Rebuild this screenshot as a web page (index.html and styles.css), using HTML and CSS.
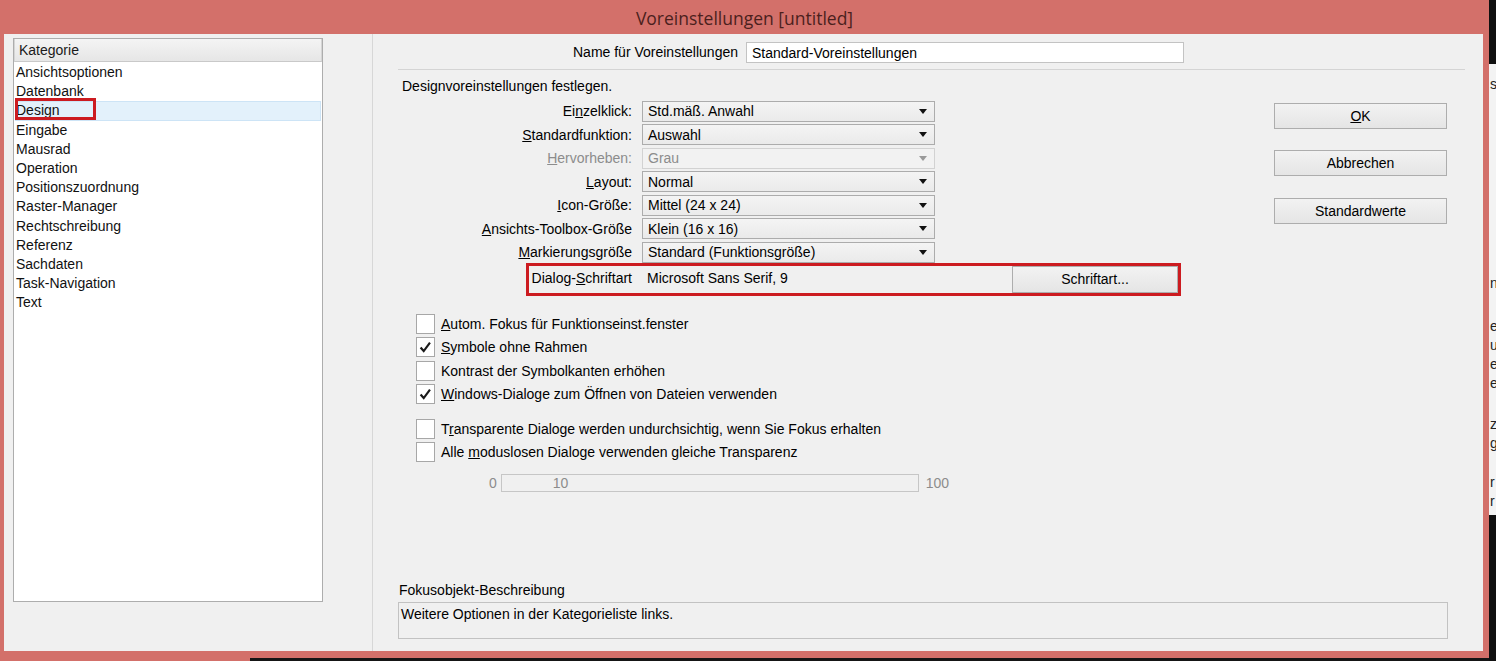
FILE: index.html
```
<!DOCTYPE html>
<html lang="de">
<head>
  <meta charset="UTF-8" />
  <title>Voreinstellungen [untitled]</title>
  <link rel="stylesheet" href="styles.css">
</head>
<body>
  <div class="screen">
    <div class="window">
      <div class="titlebar">Voreinstellungen [untitled]</div>
      <div class="frame">
        <div class="content">

          <div class="sidebar">
            <div class="listbox">
              <div class="list-head">Kategorie</div>
              <ul class="list">
                <li>Ansichtsoptionen</li>
                <li>Datenbank</li>
                <li class="selected">Design<span class="mark"></span></li>
                <li>Eingabe</li>
                <li>Mausrad</li>
                <li>Operation</li>
                <li>Positionszuordnung</li>
                <li>Raster-Manager</li>
                <li>Rechtschreibung</li>
                <li>Referenz</li>
                <li>Sachdaten</li>
                <li>Task-Navigation</li>
                <li>Text</li>
              </ul>
            </div>
          </div>

          <div class="main">
            <div class="name-row">
              <span class="label">Name für Voreinstellungen</span>
              <div class="textbox">Standard-Voreinstellungen</div>
            </div>
            <div class="rule"></div>
            <p class="intro">Designvoreinstellungen festlegen.</p>

            <div class="body">
              <div class="form">
                <div class="fields">
                  <span class="label">Ei<u>n</u>zelklick:</span>
                  <div class="select"><span>Std.mäß. Anwahl</span><svg class="arrow" viewBox="0 0 8 5"><polygon points="0,0 8,0 4,5"/></svg></div>

                  <span class="label"><u>S</u>tandardfunktion:</span>
                  <div class="select"><span>Auswahl</span><svg class="arrow" viewBox="0 0 8 5"><polygon points="0,0 8,0 4,5"/></svg></div>

                  <span class="label disabled"><u>H</u>ervorheben:</span>
                  <div class="select disabled"><span>Grau</span><svg class="arrow" viewBox="0 0 8 5"><polygon points="0,0 8,0 4,5"/></svg></div>

                  <span class="label"><u>L</u>ayout:</span>
                  <div class="select"><span>Normal</span><svg class="arrow" viewBox="0 0 8 5"><polygon points="0,0 8,0 4,5"/></svg></div>

                  <span class="label"><u>I</u>con-Größe:</span>
                  <div class="select"><span>Mittel (24 x 24)</span><svg class="arrow" viewBox="0 0 8 5"><polygon points="0,0 8,0 4,5"/></svg></div>

                  <span class="label"><u>A</u>nsichts-Toolbox-Größe</span>
                  <div class="select"><span>Klein (16 x 16)</span><svg class="arrow" viewBox="0 0 8 5"><polygon points="0,0 8,0 4,5"/></svg></div>

                  <span class="label"><u>M</u>arkierungsgröße</span>
                  <div class="select"><span>Standard (Funktionsgröße)</span><svg class="arrow" viewBox="0 0 8 5"><polygon points="0,0 8,0 4,5"/></svg></div>
                </div>

                <div class="font-row">
                  <span class="font-label">Dialog-<u>S</u>chriftart</span>
                  <span class="font-value">Microsoft Sans Serif, 9</span>
                  <button class="btn btn-font">Schriftart...</button>
                </div>

                <div class="checks">
                  <div class="check"><span class="box"></span><span><u>A</u>utom. Fokus für Funktionseinst.fenster</span></div>
                  <div class="check"><span class="box"><svg viewBox="0 0 19 20"><polyline points="4,10.5 7.5,14.5 14.5,5"/></svg></span><span><u>S</u>ymbole ohne Rahmen</span></div>
                  <div class="check"><span class="box"></span><span>Kontrast der Symbolkanten erhöhen</span></div>
                  <div class="check"><span class="box"><svg viewBox="0 0 19 20"><polyline points="4,10.5 7.5,14.5 14.5,5"/></svg></span><span><u>W</u>indows-Dialoge zum Öffnen von Dateien verwenden</span></div>
                </div>

                <div class="checks checks-gap">
                  <div class="check"><span class="box"></span><span>T<u>r</u>ansparente Dialoge werden undurchsichtig, wenn Sie Fokus erhalten</span></div>
                  <div class="check"><span class="box"></span><span>Alle <u>m</u>oduslosen Dialoge verwenden gleiche Transparenz</span></div>
                </div>

                <div class="slider">
                  <span>0</span>
                  <div class="track">10</div>
                  <span class="max">100</span>
                </div>
              </div>

              <div class="buttons">
                <button class="btn"><u>O</u>K</button>
                <button class="btn">Abbrechen</button>
                <button class="btn">Standardwerte</button>
              </div>
            </div>

            <div class="focus">
              <div class="focus-label">Fokusobjekt-Beschreibung</div>
              <div class="focus-box">Weitere Optionen in der Kategorieliste links.</div>
            </div>
          </div>

        </div>
      </div>
      <div class="bottom-edge"><div class="taskbar"></div></div>
    </div>

    <div class="behind">
      <div class="behind-page">
        <div class="frag f1">s</div>
        <div class="frag f2">n</div>
        <div class="frag f3">e</div>
        <div class="frag">u</div>
        <div class="frag">e</div>
        <div class="frag">e</div>
        <div class="frag f4">z</div>
        <div class="frag">g</div>
        <div class="frag f5">r</div>
        <div class="frag">r</div>
      </div>
    </div>
  </div>
</body>
</html>
```

FILE: styles.css
```
body {
  margin: 0;
  background: #d3706a;
  font-family: "Liberation Sans", Arial, sans-serif;
  font-size: 14px;
  color: #000;
}

.screen {
  display: flex;
  width: 1496px;
  height: 661px;
  overflow: hidden;
}

.window {
  width: 1489px;
  display: flex;
  flex-direction: column;
  background: #d3706a;
}

.titlebar {
  height: 34px;
  display: flex;
  justify-content: center;
  align-items: center;
  padding-top: 1px;
  box-sizing: border-box;
  font-family: "Open Sans", "Noto Sans", sans-serif;
  font-size: 17.5px;
  color: #4b1f1d;
}

.frame {
  padding: 0 6px 0 4px;
}

.content {
  height: 617px;
  background: #f0f0f0;
  display: flex;
}

/* left category list */
.sidebar {
  width: 369px;
  border-right: 1px solid #d7d7d7;
  padding: 4px 0 0 9px;
  box-sizing: border-box;
}

.listbox {
  width: 310px;
  height: 564px;
  box-sizing: border-box;
  border: 1px solid #adadad;
  background: #fff;
}

.list-head {
  height: 22px;
  line-height: 23px;
  padding-left: 4px;
  border: 1px solid #d5d5d5;
  border-top: none;
  border-bottom-color: #c9c9c9;
  background: linear-gradient(#f4f4f4, #e6e6e6);
  color: #1a1a1a;
}

.list {
  list-style: none;
  margin: 0;
  padding: 1px 0 0;
}

.list li {
  height: 19.2px;
  line-height: 19.2px;
  padding-left: 1px;
  margin: 0 1px;
  color: #111;
}

.list li.selected {
  position: relative;
  background: #e3f1fb;
  box-shadow: inset 0 0 0 1px #cde4f6;
}

.mark {
  position: absolute;
  left: 0;
  top: -3px;
  width: 81px;
  height: 22px;
  box-sizing: border-box;
  border: 3px solid #cc1b20;
}

/* right side */
.main {
  flex: 1;
  display: flex;
  flex-direction: column;
}

.label {
  text-align: right;
  white-space: nowrap;
}

.label.disabled {
  color: #8c8c8c;
}

.name-row {
  display: grid;
  grid-template-columns: 365px 438px;
  column-gap: 8px;
  align-items: center;
  margin-top: 7px;
  line-height: 22px;
}

.textbox {
  height: 21px;
  line-height: 20px;
  box-sizing: border-box;
  border: 1px solid #c3c3c3;
  background: #fff;
  padding-left: 5px;
}

.rule {
  margin: 6px 18px 0 25px;
  border-top: 1px solid #d4d4d4;
}

.intro {
  margin: 8px 0 0 29px;
  line-height: 17px;
}

.body {
  display: flex;
}

.form {
  width: 887px;
}

.fields {
  display: grid;
  grid-template-columns: 259px 293px;
  grid-auto-rows: 21px;
  column-gap: 10px;
  row-gap: 2.5px;
  margin-top: 5.5px;
  align-items: center;
}

.select {
  height: 21px;
  box-sizing: border-box;
  border: 1px solid #acacac;
  background: linear-gradient(#f4f4f4, #eaeaea);
  display: flex;
  align-items: center;
  justify-content: space-between;
  padding: 0 7px 0 5px;
}

.arrow {
  width: 8px;
  height: 5px;
  fill: #111;
}

.select.disabled {
  color: #8c8c8c;
  border-color: #d2d2d2;
  background: #f2f2f2;
}

.select.disabled .arrow {
  fill: #9a9a9a;
}

.font-row {
  margin-left: 153px;
  width: 655px;
  height: 33px;
  box-sizing: border-box;
  border: 3px solid #cc1b20;
  display: flex;
  align-items: center;
}

.font-label {
  width: 103px;
  text-align: right;
  white-space: nowrap;
  margin-bottom: 3px;
}

.font-value {
  flex: 1;
  margin-left: 15px;
  margin-bottom: 3px;
}

.btn {
  width: 173px;
  height: 26px;
  box-sizing: border-box;
  border: 1px solid #adadad;
  background: linear-gradient(#f2f2f2, #e5e5e5);
  font-family: inherit;
  font-size: 14px;
  color: #000;
  padding: 0;
}

.btn-font {
  width: 166px;
  height: 27px;
}

.checks {
  margin: 16.5px 0 0 43px;
}

.checks-gap {
  margin-top: 11px;
}

.check {
  height: 23.5px;
  display: flex;
  align-items: center;
}

.box {
  width: 19px;
  height: 20px;
  box-sizing: border-box;
  border: 1px solid #a7a7a7;
  background: #fff;
  margin-right: 6px;
  display: flex;
}

.box svg {
  width: 17px;
  height: 18px;
  fill: none;
  stroke: #1a1a1a;
  stroke-width: 2.4;
}

.slider {
  margin-top: 9.5px;
  padding-left: 116px;
  height: 18px;
  display: flex;
  align-items: center;
  color: #8c8c8c;
}

.track {
  width: 418px;
  height: 18px;
  box-sizing: border-box;
  margin-left: 4px;
  border: 1px solid #c6c6c6;
  padding-left: 51px;
  line-height: 16px;
}

.max {
  margin-left: 7px;
}

.buttons {
  margin-left: 14px;
  padding-top: 7.5px;
  display: flex;
  flex-direction: column;
  gap: 21.5px;
}

.focus {
  margin-top: auto;
  padding: 0 35px 12px 25px;
}

.focus-label {
  line-height: 16px;
  padding-left: 1px;
  margin-bottom: 4px;
}

.focus-box {
  height: 37px;
  box-sizing: border-box;
  border: 1px solid #c2c2c2;
  padding: 3px 2px;
  line-height: 16px;
}

.bottom-edge {
  flex: 1;
  display: flex;
  align-items: flex-end;
  padding-left: 250px;
}

.taskbar {
  flex: 1;
  height: 3px;
  background: #151515;
}

/* window behind, barely visible at the right edge */
.behind {
  width: 7px;
  background: #101010;
  overflow: hidden;
}

.behind-page {
  margin-top: 64px;
  height: 451px;
  background: #f3f3f3;
  padding-left: 1px;
  line-height: 16px;
  color: #222;
  overflow: hidden;
}

.frag {
  height: 19px;
}

.f1 { margin-top: 12px; }
.f2 { margin-top: 180px; }
.f3 { margin-top: 24px; }
.f4 { margin-top: 22px; }
.f5 { margin-top: 20px; }
```
